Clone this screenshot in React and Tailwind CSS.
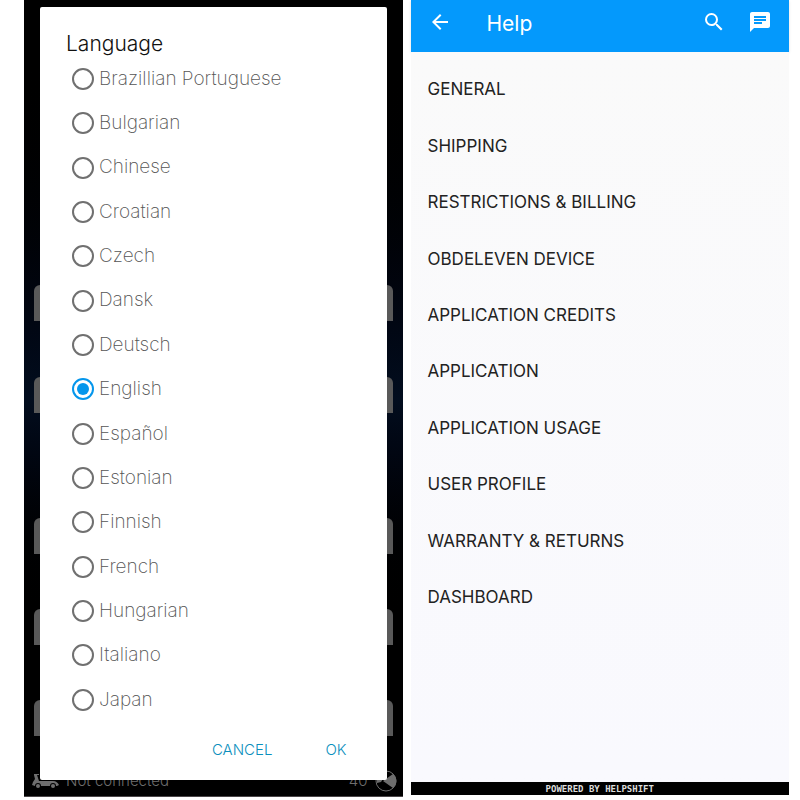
import React from 'react';
import { MdArrowBack, MdSearch, MdChat } from 'react-icons/md';

const languages = [
  'Brazillian Portuguese',
  'Bulgarian',
  'Chinese',
  'Croatian',
  'Czech',
  'Dansk',
  'Deutsch',
  'English',
  'Español',
  'Estonian',
  'Finnish',
  'French',
  'Hungarian',
  'Italiano',
  'Japan',
];

const topics = [
  'GENERAL',
  'SHIPPING',
  'RESTRICTIONS & BILLING',
  'OBDELEVEN DEVICE',
  'APPLICATION CREDITS',
  'APPLICATION',
  'APPLICATION USAGE',
  'USER PROFILE',
  'WARRANTY & RETURNS',
  'DASHBOARD',
];

const CarIcon = () => (
  <svg viewBox="0 0 28 16" className="w-7 h-4" fill="currentColor" aria-hidden="true">
    <path d="M3 1h5v1H6l2 6h14c3 0 5 2 6 4l-2 1h-1a3 3 0 0 0-6 0h-9a3 3 0 0 0-6 0l-3-1 1-3 2-3-1-4z" />
    <circle cx="7" cy="13" r="2" />
    <circle cx="22" cy="13" r="2" />
  </svg>
);

const GaugeIcon = () => (
  <svg viewBox="0 0 22 22" className="size-[22px]" aria-hidden="true">
    <circle cx="11" cy="11" r="10" fill="none" stroke="currentColor" strokeWidth="1" />
    <path d="M8 11 18 4a9 9 0 0 1 0 14z" fill="currentColor" />
    <path d="M2 9h6l-2 3-4 1z" fill="currentColor" />
  </svg>
);

const LanguageScreen = () => {
  return (
    <section className="relative flex flex-col mb-[3px] px-4 pt-[7px] pb-[17px] bg-linear-to-b from-black from-5% via-[#020d1e] via-50% to-black to-80%">
      {/* Dimmed screen behind the dialog */}
      <div className="absolute inset-0 flex flex-col px-[10px] pt-[285px] text-[#6e6e6e]">
        <div className="h-9 mb-[56px] rounded-t-md bg-[#595959]"></div>
        <div className="h-9 mb-[105px] rounded-t-md bg-[#595959]"></div>
        <div className="h-9 mb-[55px] rounded-t-md bg-[#595959]"></div>
        <div className="h-9 mb-[55px] rounded-t-md bg-[#595959]"></div>
        <div className="h-9 rounded-t-md bg-[#595959]"></div>
        <div className="mt-auto -ml-[3px] -mr-1 mb-1 flex items-center gap-[7px] text-[15px] font-light">
          <CarIcon />
          <span>Not connected</span>
          <span className="ml-auto">40</span>
          <GaugeIcon />
        </div>
        <div className="h-px -mx-[10px] bg-[#4a4648]"></div>
      </div>

      {/* Dialog */}
      <form className="relative flex-1 flex flex-col rounded-xs bg-white px-[26px] pt-[23px]">
        <h1 className="mb-px text-[21px] leading-7 font-light text-[#111111]">Language</h1>
        <div className="flex-1 flex flex-col justify-between">
          {languages.map((name) => (
            <label key={name} className="flex items-center gap-[5px] h-10 px-[6px] text-[19px] font-extralight text-[#555555]">
              <input
                type="radio"
                name="language"
                defaultChecked={name === 'English'}
                className="appearance-none grid place-content-center size-[22px] rounded-full border-2 border-[#707070] checked:border-[#0496ec] before:size-3 before:rounded-full checked:before:bg-[#0496ec]"
              />
              <span>{name}</span>
            </label>
          ))}
        </div>
        <div className="flex justify-end gap-[53px] px-[14px] pt-[18px] pb-[18px] text-[15px] leading-6 font-light text-[#0a8fbd]">
          <button type="button">CANCEL</button>
          <button type="button">OK</button>
        </div>
      </form>
    </section>
  );
};

const HelpScreen = () => {
  return (
    <section className="flex flex-col mb-[5px] bg-[#fafafa]">
      <header className="flex items-center h-[52px] px-[17px] pb-2 bg-[#0499fc] text-white shadow-sm">
        <button type="button" aria-label="Back">
          <MdArrowBack className="size-6" />
        </button>
        <h1 className="ml-[35px] mt-1 text-[21px] leading-7">Help</h1>
        <button type="button" aria-label="Search" className="ml-auto">
          <MdSearch className="size-6" />
        </button>
        <button type="button" aria-label="Messages" className="ml-[22px]">
          <MdChat className="size-6" />
        </button>
      </header>

      <ul className="flex-1 grid auto-rows-fr px-[17px] pt-[10px] pb-[156px] text-[17px] text-[#222222] bg-linear-to-b from-[#fafafa] to-[#f9f9fe]">
        {topics.map((topic) => (
          <li key={topic} className="flex items-center">
            <a href="#">{topic}</a>
          </li>
        ))}
      </ul>

      <footer className="pt-[2px] bg-black text-center text-[9px] leading-[11px] font-bold text-[#dddddd] font-['DejaVu_Sans_Mono',monospace]">
        POWERED BY HELPSHIFT
      </footer>
    </section>
  );
};

const App = () => {
  return (
    <div className="grid grid-cols-2 min-h-screen gap-2 pl-6 pr-[11px] bg-white font-[Inter,sans-serif]">
      <LanguageScreen />
      <HelpScreen />
    </div>
  );
};

export default App;
